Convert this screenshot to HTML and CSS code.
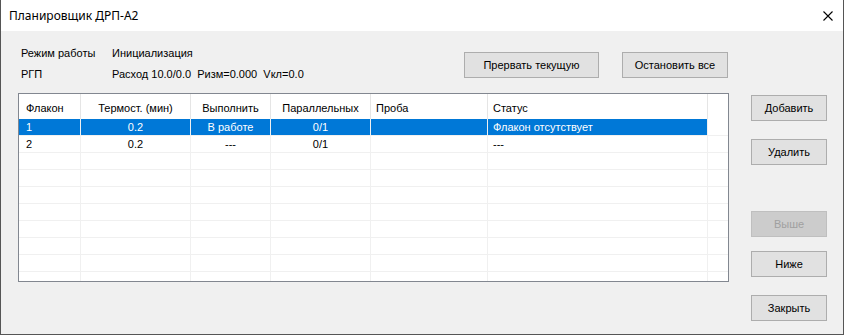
FILE: index.html
```html
<!DOCTYPE html>
<html lang="ru">
<head>
  <meta charset="UTF-8" />
  <meta name="viewport" content="width=device-width, initial-scale=1.0" />
  <title>Планировщик ДРП-А2</title>
  <link rel="stylesheet" href="styles.css">
</head>
<body>
  <div class="window">
    <!-- Title bar -->
    <div class="titlebar">
      <span class="title">Планировщик ДРП-А2</span>
      <svg class="close" width="10" height="10" viewBox="0 0 10 10">
        <path d="M0.5 0.5L9.5 9.5M9.5 0.5L0.5 9.5" stroke="#000" stroke-width="1.1" fill="none" />
      </svg>
    </div>

    <div class="client">
      <!-- Status + top actions -->
      <div class="top">
        <div class="info">
          <span>Режим работы</span><span>Инициализация</span>
          <span>РГП</span><span class="pre">Расход 10.0/0.0  Ризм=0.000  Vкл=0.0</span>
        </div>
        <div class="actions">
          <button class="btn btn-abort">Прервать текущую</button>
          <button class="btn btn-stop">Остановить все</button>
        </div>
      </div>

      <!-- Queue list -->
      <div class="list">
        <table>
          <colgroup>
            <col class="c-num"><col class="c-temp"><col class="c-run"><col class="c-par"><col class="c-probe"><col class="c-status"><col class="c-fill">
          </colgroup>
          <thead>
            <tr>
              <th class="first">Флакон</th>
              <th>Термост. (мин)</th>
              <th>Выполнить</th>
              <th>Параллельных</th>
              <th class="left">Проба</th>
              <th class="left">Статус</th>
              <th class="fill"></th>
            </tr>
          </thead>
          <tbody>
            <tr class="selected">
              <td class="first">1</td><td>0.2</td><td>В работе</td><td>0/1</td><td class="left"></td><td class="left">Флакон отсутствует</td><td class="fill"></td>
            </tr>
            <tr>
              <td class="first">2</td><td>0.2</td><td>---</td><td>0/1</td><td class="left"></td><td class="left">---</td><td class="fill"></td>
            </tr>
            <tr><td></td><td></td><td></td><td></td><td></td><td></td><td class="fill"></td></tr>
            <tr><td></td><td></td><td></td><td></td><td></td><td></td><td class="fill"></td></tr>
            <tr><td></td><td></td><td></td><td></td><td></td><td></td><td class="fill"></td></tr>
            <tr><td></td><td></td><td></td><td></td><td></td><td></td><td class="fill"></td></tr>
            <tr><td></td><td></td><td></td><td></td><td></td><td></td><td class="fill"></td></tr>
            <tr><td></td><td></td><td></td><td></td><td></td><td></td><td class="fill"></td></tr>
            <tr><td></td><td></td><td></td><td></td><td></td><td></td><td class="fill"></td></tr>
            <tr><td></td><td></td><td></td><td></td><td></td><td></td><td class="fill"></td></tr>
          </tbody>
        </table>
      </div>

      <!-- Side buttons -->
      <div class="side">
        <button class="btn">Добавить</button>
        <button class="btn gap">Удалить</button>
        <button class="btn gap-lg" disabled>Выше</button>
        <button class="btn gap-sm">Ниже</button>
        <button class="btn gap">Закрыть</button>
      </div>
    </div>
  </div>
</body>
</html>
```

FILE: styles.css
```css
* { box-sizing: border-box; }
html, body { margin: 0; }
body {
  font-family: 'Liberation Sans', Arial, sans-serif;
  font-size: 11px;
  color: #000;
  background: #f0f0f0;
}

.window {
  width: 844px;
  height: 335px;
  display: flex;
  flex-direction: column;
  border: 1px solid #555;
  border-top: none;
  background: #f0f0f0;
}

.titlebar {
  height: 31px;
  flex: none;
  background: #fff;
  display: flex;
  align-items: center;
  justify-content: space-between;
  padding-left: 8px;
}
.title {
  font-family: 'Noto Sans', sans-serif;
  font-size: 12px;
  line-height: 31px;
}
.close { display: block; margin-right: 10px; }

.client {
  flex: 1;
  display: grid;
  grid-template-columns: 711px 76px;
  grid-template-rows: 46px auto;
  column-gap: 22px;
  align-items: start;
  padding: 16px 0 0 17px;
}

.top {
  grid-column: 1;
  display: flex;
  justify-content: space-between;
  align-items: flex-start;
}
.info {
  display: grid;
  grid-template-columns: 91px auto;
  row-gap: 8px;
  line-height: 13px;
  margin-left: 3px;
}
.pre { white-space: pre; }
.actions {
  display: flex;
  gap: 23px;
  margin-top: 5px;
  margin-right: 1px;
}

.btn {
  height: 26px;
  padding: 0;
  border: 1px solid #adadad;
  background: #e1e1e1;
  color: #000;
  font: inherit;
  line-height: 13px;
}
.btn:disabled {
  background: #cccccc;
  border-color: #bfbfbf;
  color: #a0a0a0;
}
.btn-abort { width: 135px; }
.btn-stop { width: 106px; }

.list {
  grid-column: 1;
  height: 189px;
  border: 1px solid #828790;
  background: #fff;
  overflow: hidden;
}
table {
  width: 709px;
  table-layout: fixed;
  border-collapse: separate;
  border-spacing: 0;
}
.c-num { width: 62px; }
.c-temp { width: 110px; }
.c-run { width: 80px; }
.c-par { width: 100px; }
.c-probe { width: 117px; }
.c-status { width: 220px; }
.c-fill { width: 20px; }

th {
  height: 25px;
  padding: 6px 0 3px;
  line-height: 16px;
  font-weight: normal;
  text-align: center;
  white-space: nowrap;
  border-right: 1px solid #e5e5e5;
}
td {
  height: 17px;
  padding: 0;
  line-height: 16px;
  text-align: center;
  white-space: nowrap;
  border-right: 1px solid #f0f0f0;
  border-bottom: 1px solid #f0f0f0;
}
th.first, td.first { text-align: left; padding-left: 7px; }
th.left, td.left { text-align: left; padding-left: 5px; }
th.fill, td.fill { border-right: none; }

tr.selected td {
  background: #0078d7;
  color: #fff;
}
tr.selected td.fill { background: #fff; }

.side {
  grid-column: 2;
  display: flex;
  flex-direction: column;
  margin-top: 2px;
}
.side .btn { width: 76px; }
.gap { margin-top: 18px; }
.gap-lg { margin-top: 46px; }
.gap-sm { margin-top: 14px; }
```
